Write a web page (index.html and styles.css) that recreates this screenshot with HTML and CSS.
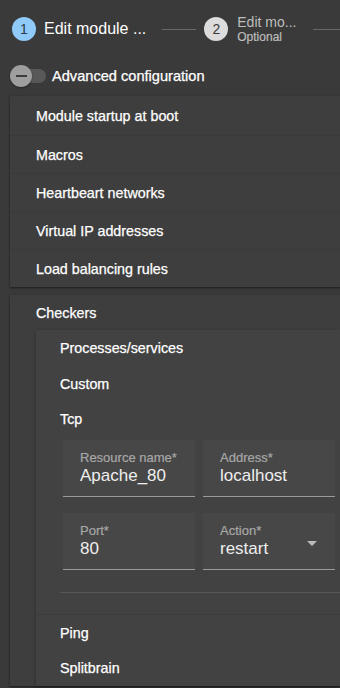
FILE: index.html
```html
<!DOCTYPE html>
<html lang="en">
<head>
<meta charset="utf-8">
<title>Edit module</title>
<link rel="stylesheet" href="styles.css">
</head>
<body>
<div class="stepper">
  <div class="step">
    <span class="step-icon active">1</span>
    <span class="step-label">Edit module ...</span>
  </div>
  <div class="connector"></div>
  <div class="step">
    <span class="step-icon">2</span>
    <span class="step-text">
      <span class="step-title">Edit mo...</span>
      <span class="optional">Optional</span>
    </span>
  </div>
  <div class="connector grow"></div>
</div>

<div class="toggle-row">
  <div class="switch">
    <span class="track"></span>
    <span class="thumb"></span>
  </div>
  <span class="toggle-label">Advanced configuration</span>
</div>

<div class="panel panel-first">
  <div class="row">Module startup at boot</div>
  <div class="row">Macros</div>
  <div class="row">Heartbeart networks</div>
  <div class="row">Virtual IP addresses</div>
  <div class="row">Load balancing rules</div>
</div>

<div class="panel panel-second">
  <div class="row head">Checkers</div>
  <div class="inner">
    <div class="sub">Processes/services</div>
    <div class="sub">Custom</div>
    <div class="sub open">Tcp</div>
    <div class="details">
      <div class="fields">
        <div class="field">
          <span class="label">Resource name*</span>
          <span class="value">Apache_80</span>
        </div>
        <div class="field">
          <span class="label">Address*</span>
          <span class="value">localhost</span>
        </div>
        <div class="field">
          <span class="label">Port*</span>
          <span class="value">80</span>
        </div>
        <div class="field select">
          <span class="label">Action*</span>
          <span class="value">restart</span>
          <svg class="caret" width="10" height="5" viewBox="0 0 10 5"><path d="M0 0h10L5 5z" fill="#bdbdbd"/></svg>
        </div>
      </div>
      <div class="divider"></div>
    </div>
    <div class="sub sep">Ping</div>
    <div class="sub">Splitbrain</div>
  </div>
</div>
</body>
</html>
```

FILE: styles.css
```css
html, body {
  margin: 0;
  padding: 0;
}
body {
  background: #3a3a3a;
  font-family: "Liberation Sans", Arial, sans-serif;
  color: #ffffff;
  width: 340px;
  height: 688px;
  overflow: hidden;
}

/* Stepper */
.stepper {
  display: flex;
  align-items: center;
  height: 58px;
  padding-left: 12px;
}
.step {
  display: flex;
  align-items: center;
  flex: none;
}
.step-icon {
  width: 24px;
  height: 24px;
  border-radius: 50%;
  background: #dcdcdc;
  color: #3a3a3a;
  font-size: 14px;
  display: flex;
  align-items: center;
  justify-content: center;
  flex: none;
}
.step-icon.active {
  background: #90caf9;
  color: #2d3a45;
}
.step-label {
  font-size: 16px;
  margin-left: 8px;
  color: #ffffff;
}
.connector {
  width: 34px;
  height: 1px;
  background: #686868;
  margin: 0 8px 0 16px;
  flex: none;
}
.connector.grow {
  flex: 1;
  width: auto;
  margin: 0 0 0 17px;
}
.step-text {
  display: flex;
  flex-direction: column;
  margin-left: 9px;
}
.step-title {
  font-size: 14px;
  line-height: 16px;
  color: #bdbdbd;
}
.optional {
  font-size: 12px;
  line-height: 14px;
  color: #bdbdbd;
  -webkit-text-stroke: 0.2px #bdbdbd;
}

/* Toggle */
.toggle-row {
  display: flex;
  align-items: center;
  height: 36px;
  padding-left: 10px;
}
.switch {
  display: grid;
  align-items: center;
  width: 38px;
  margin-right: 4px;
}
.track, .thumb {
  grid-area: 1 / 1;
}
.track {
  width: 34px;
  height: 14px;
  margin-left: 2px;
  border-radius: 7px;
  background: #585858;
}
.thumb {
  width: 22px;
  height: 22px;
  border-radius: 50%;
  background: #9e9e9e;
  display: flex;
  align-items: center;
  justify-content: center;
  box-shadow: 0 1px 2px rgba(0, 0, 0, 0.4);
}
.thumb::before {
  content: "";
  width: 11px;
  height: 2.5px;
  background: #3c3c3c;
}
.toggle-label {
  font-size: 14.6px;
  color: #ffffff;
  -webkit-text-stroke: 0.25px #ffffff;
}

/* Panels */
.panel {
  margin-left: 10px;
  background: #3e3e3e;
  box-shadow: 0 1px 3px rgba(0, 0, 0, 0.35), 0 1px 1px rgba(0, 0, 0, 0.2);
}
.panel-first {
  margin-top: 2px;
  padding-top: 1px;
}
.panel-second {
  margin-top: 8px;
}
.row {
  box-sizing: border-box;
  height: 38px;
  display: flex;
  align-items: center;
  padding-left: 26px;
  font-size: 14.3px;
  -webkit-text-stroke: 0.25px #ffffff;
  border-top: 1px solid rgba(0, 0, 0, 0.06);
}
.row:first-child {
  border-top: 0;
}
.row.head {
  height: 35px;
}
.inner {
  margin-left: 26px;
  background: #424242;
  box-shadow: 0 1px 3px rgba(0, 0, 0, 0.3);
}
.sub {
  box-sizing: border-box;
  height: 36px;
  display: flex;
  align-items: center;
  padding-left: 24px;
  font-size: 14.3px;
  -webkit-text-stroke: 0.25px #ffffff;
}
.sub.open {
  height: 33px;
}
.sub.sep {
  border-top: 1px solid rgba(0, 0, 0, 0.08);
}
.details {
  padding: 5px 0 21px 24px;
}
.fields {
  display: grid;
  grid-template-columns: 1fr 1fr;
  gap: 16px 8px;
  margin: 0 5px 0 3px;
}
.field {
  background: #474747;
  padding: 10px 17px 10px;
  border-bottom: 1px solid #9a9a9a;
  display: flex;
  flex-direction: column;
  position: relative;
}
.label {
  font-size: 13px;
  line-height: 16px;
  color: #a8a8a8;
  -webkit-text-stroke: 0.2px #a8a8a8;
}
.value {
  font-size: 17px;
  line-height: 20px;
  color: #eeeeee;
}
.caret {
  position: absolute;
  right: 18px;
  top: 28px;
}
.divider {
  height: 1px;
  background: #575757;
  margin-top: 22px;
}
```
